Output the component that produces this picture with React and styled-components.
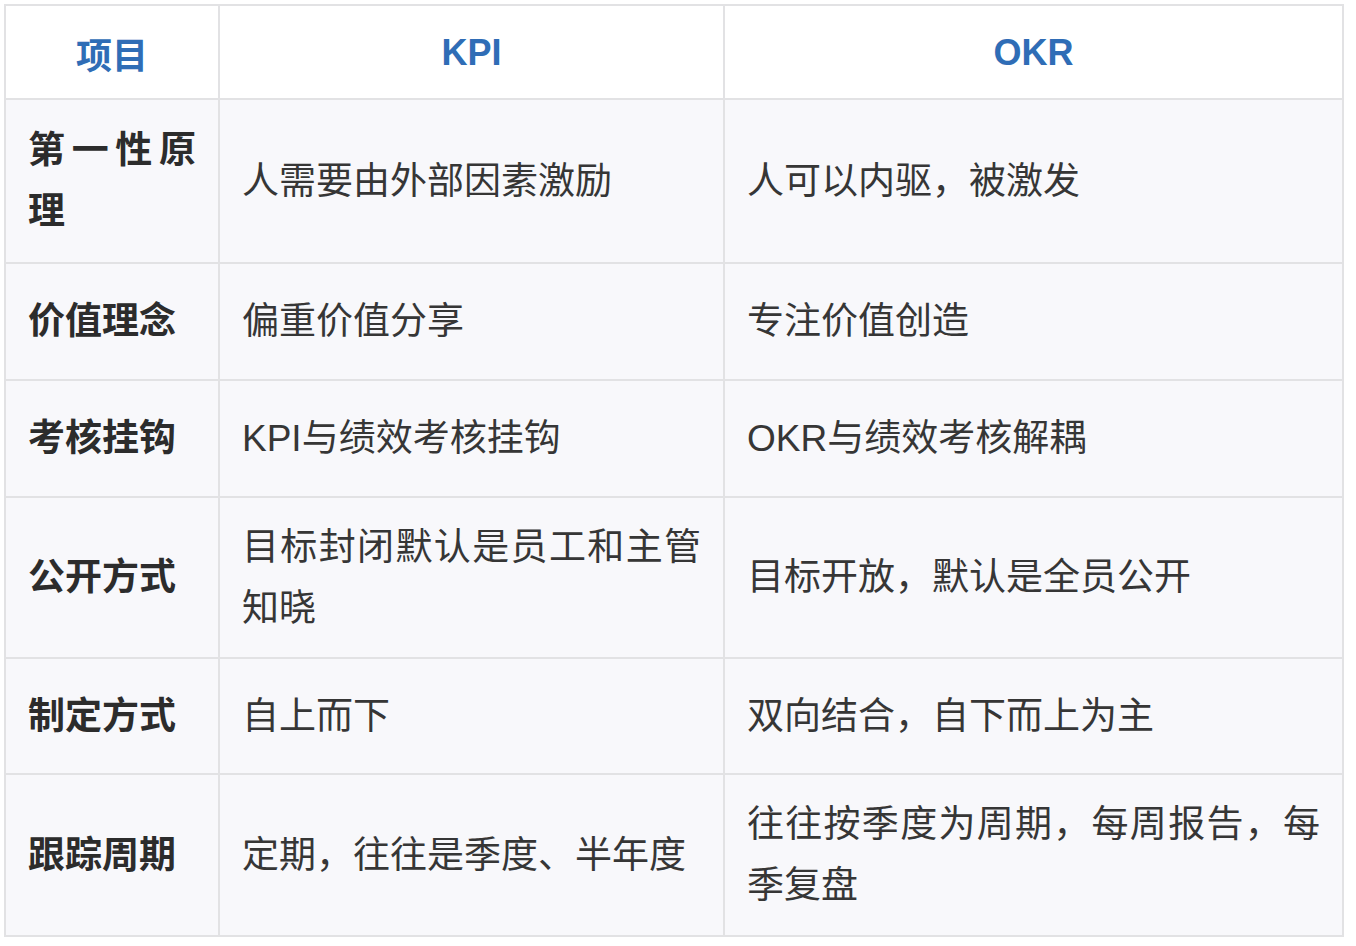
import React from 'react'
import styled, { createGlobalStyle } from 'styled-components'

const GlobalStyle = createGlobalStyle`
    body {
        margin: 0;
        background: #ffffff;
        font-family: "Liberation Sans", "Noto Sans CJK SC", sans-serif;
    }
`

const rows = [
    { item: '第一性原理', kpi: '人需要由外部因素激励', okr: '人可以内驱，被激发', height: 164 },
    { item: '价值理念', kpi: '偏重价值分享', okr: '专注价值创造', height: 117 },
    { item: '考核挂钩', kpi: 'KPI与绩效考核挂钩', okr: 'OKR与绩效考核解耦', height: 117 },
    { item: '公开方式', kpi: '目标封闭默认是员工和主管知晓', okr: '目标开放，默认是全员公开', height: 161 },
    { item: '制定方式', kpi: '自上而下', okr: '双向结合，自下而上为主', height: 116 },
    { item: '跟踪周期', kpi: '定期，往往是季度、半年度', okr: '往往按季度为周期，每周报告，每季复盘', height: 162 },
]

const App = () => {
    return (
        <Page>
            <GlobalStyle />
            <Table>
                <colgroup>
                    <col style={{ width: 214 }} />
                    <col style={{ width: 505 }} />
                    <col style={{ width: 619 }} />
                </colgroup>
                <thead>
                    <HeadRow>
                        <HeadCell>项目</HeadCell>
                        <HeadCell>KPI</HeadCell>
                        <HeadCell>OKR</HeadCell>
                    </HeadRow>
                </thead>
                <tbody>
                    {rows.map(row => (
                        <BodyRow key={row.item} h={row.height}>
                            <Cell bold>{row.item}</Cell>
                            <Cell>{row.kpi}</Cell>
                            <Cell>{row.okr}</Cell>
                        </BodyRow>
                    ))}
                </tbody>
            </Table>
        </Page>
    )
}

export default App

const Page = styled.div`
    padding: 4px;
    width: 1338px;
`

const Table = styled.table`
    width: 1338px;
    table-layout: fixed;
    border-collapse: collapse;
    border: 2px solid #e2e2e4;
    font-family: "Liberation Sans", "Noto Sans CJK SC", sans-serif;
`

const HeadRow = styled.tr`
    height: 94px;
    background: #ffffff;
`

const HeadCell = styled.th`
    border: 2px solid #e2e2e4;
    padding: 2px 22px 0;
    font-size: 36px;
    font-weight: 700;
    color: #2f6db6;
    text-align: center;
    vertical-align: middle;
`

const BodyRow = styled.tr`
    height: ${props => props.h}px;
    background: #f8f8fb;
`

const Cell = styled.td`
    border: 2px solid #e2e2e4;
    padding: 0 22px;
    font-size: 37px;
    line-height: 61px;
    font-weight: ${props => props.bold ? 700 : 400};
    color: ${props => props.bold ? '#2c2c2c' : '#363636'};
    text-align: justify;
    vertical-align: middle;
`
